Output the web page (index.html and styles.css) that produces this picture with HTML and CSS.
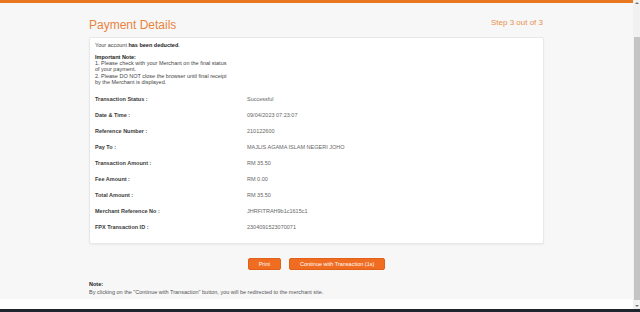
FILE: index.html
```html
<!DOCTYPE html>
<html lang="en">
<head>
    <meta charset="UTF-8">
    <title>Payment Details</title>
    <link rel="stylesheet" href="styles.css">
</head>
<body>
    <div class="window">
        <div class="page">
            <div class="topbar"></div>

            <div class="content">
                <div class="container">
                    <div class="header">
                        <h1>Payment Details</h1>
                        <span class="step">Step 3 out of 3</span>
                    </div>

                    <div class="card">
                        <p class="deducted">Your account <strong>has been deducted</strong>.</p>
                        <p class="important">
                            <strong>Important Note:</strong><br>
                            1. Please check with your Merchant on the final status of your payment.<br>
                            2. Please DO NOT close the browser until final receipt by the Merchant is displayed.
                        </p>

                        <div class="details">
                            <span class="label">Transaction Status :</span><span class="value">Successful</span>
                            <span class="label">Date &amp; Time :</span><span class="value">09/04/2023 07:23:07</span>
                            <span class="label">Reference Number :</span><span class="value">210122600</span>
                            <span class="label">Pay To :</span><span class="value">MAJLIS AGAMA ISLAM NEGERI JOHO</span>
                            <span class="label">Transaction Amount :</span><span class="value">RM 35.50</span>
                            <span class="label">Fee Amount :</span><span class="value">RM 0.00</span>
                            <span class="label">Total Amount :</span><span class="value">RM 35.50</span>
                            <span class="label">Merchant Reference No :</span><span class="value">JHRFITRAH9b1c1615c1</span>
                            <span class="label">FPX Transaction ID :</span><span class="value">2304091523070071</span>
                        </div>
                    </div>

                    <div class="buttons">
                        <button>Print</button>
                        <button>Continue with Transaction (1s)</button>
                    </div>

                    <div class="note">
                        <strong>Note:</strong><br>
                        By clicking on the "Continue with Transaction" button, you will be redirected to the merchant site.
                    </div>
                </div>
            </div>

            <div class="page-foot"></div>
        </div>

        <div class="scrollbar">
            <span class="arrow up"></span>
            <span class="thumb"></span>
            <span class="arrow down"></span>
        </div>
    </div>
    <div class="taskbar"></div>
</body>
</html>
```

FILE: styles.css
```css
html, body {
    margin: 0;
    padding: 0;
    height: 312px;
    overflow: hidden;
}

body {
    font-family: 'Liberation Sans', Arial, sans-serif;
    color: #333;
    display: flex;
    flex-direction: column;
    background: #fff;
}

.window {
    flex: 1;
    display: flex;
    min-height: 0;
}

.page {
    flex: 1;
    display: flex;
    flex-direction: column;
}

.topbar {
    height: 3px;
    background-color: #e8771f;
}

.content {
    background-color: #f7f7f7;
    padding: 15px 0 3px;
}

.container {
    width: 455px;
    margin: 0 auto;
}

.header {
    display: flex;
    justify-content: space-between;
    align-items: flex-start;
}

h1 {
    margin: 0;
    font-size: 12px;
    line-height: 14px;
    font-weight: normal;
    color: #e8843e;
}

.step {
    font-size: 8px;
    line-height: 10px;
    color: #e98f4f;
    margin-right: 1px;
}

.card {
    margin-top: 5px;
    background: #fff;
    border: 1px solid #e8e8e8;
    border-radius: 2px;
    box-shadow: 0 1px 2px rgba(0, 0, 0, 0.05);
    padding: 4px 5px 8px;
    font-size: 5.5px;
    color: #444;
}

.card p {
    margin: 0;
    line-height: 6.25px;
}

.card strong {
    color: #222;
}

.important {
    margin-top: 5.5px !important;
    max-width: 134px;
}

.details {
    display: grid;
    grid-template-columns: 152px 1fr;
    margin-top: 6.3px;
    line-height: 16px;
}

.label {
    font-weight: bold;
    color: #3a3a3a;
}

.value {
    color: #666;
}

.buttons {
    display: flex;
    justify-content: center;
    gap: 8px;
    margin-top: 14px;
}

.buttons button {
    font-family: inherit;
    font-size: 5.5px;
    height: 12px;
    padding: 0 10px;
    color: #fff;
    background-color: #ef6c21;
    border: 1px solid #e0621a;
    border-radius: 2px;
}

.note {
    margin-top: 11px;
    font-size: 5.5px;
    line-height: 7.2px;
    color: #555;
}

.note strong {
    color: #222;
}

.page-foot {
    flex: 1;
    background: #fff;
}

.scrollbar {
    width: 7px;
    background: #f1f1f1;
    display: flex;
    flex-direction: column;
    align-items: center;
    padding: 2px 0;
}

.arrow {
    width: 0;
    height: 0;
    border-left: 2px solid transparent;
    border-right: 2px solid transparent;
}

.arrow.up {
    border-bottom: 2px solid #777;
}

.arrow.down {
    border-top: 2px solid #777;
    margin-top: 5px;
}

.thumb {
    width: 6px;
    flex: 1;
    margin-top: 33px;
    background: #c4c4c4;
}

.taskbar {
    height: 3px;
    background-color: #1f252d;
}
```
